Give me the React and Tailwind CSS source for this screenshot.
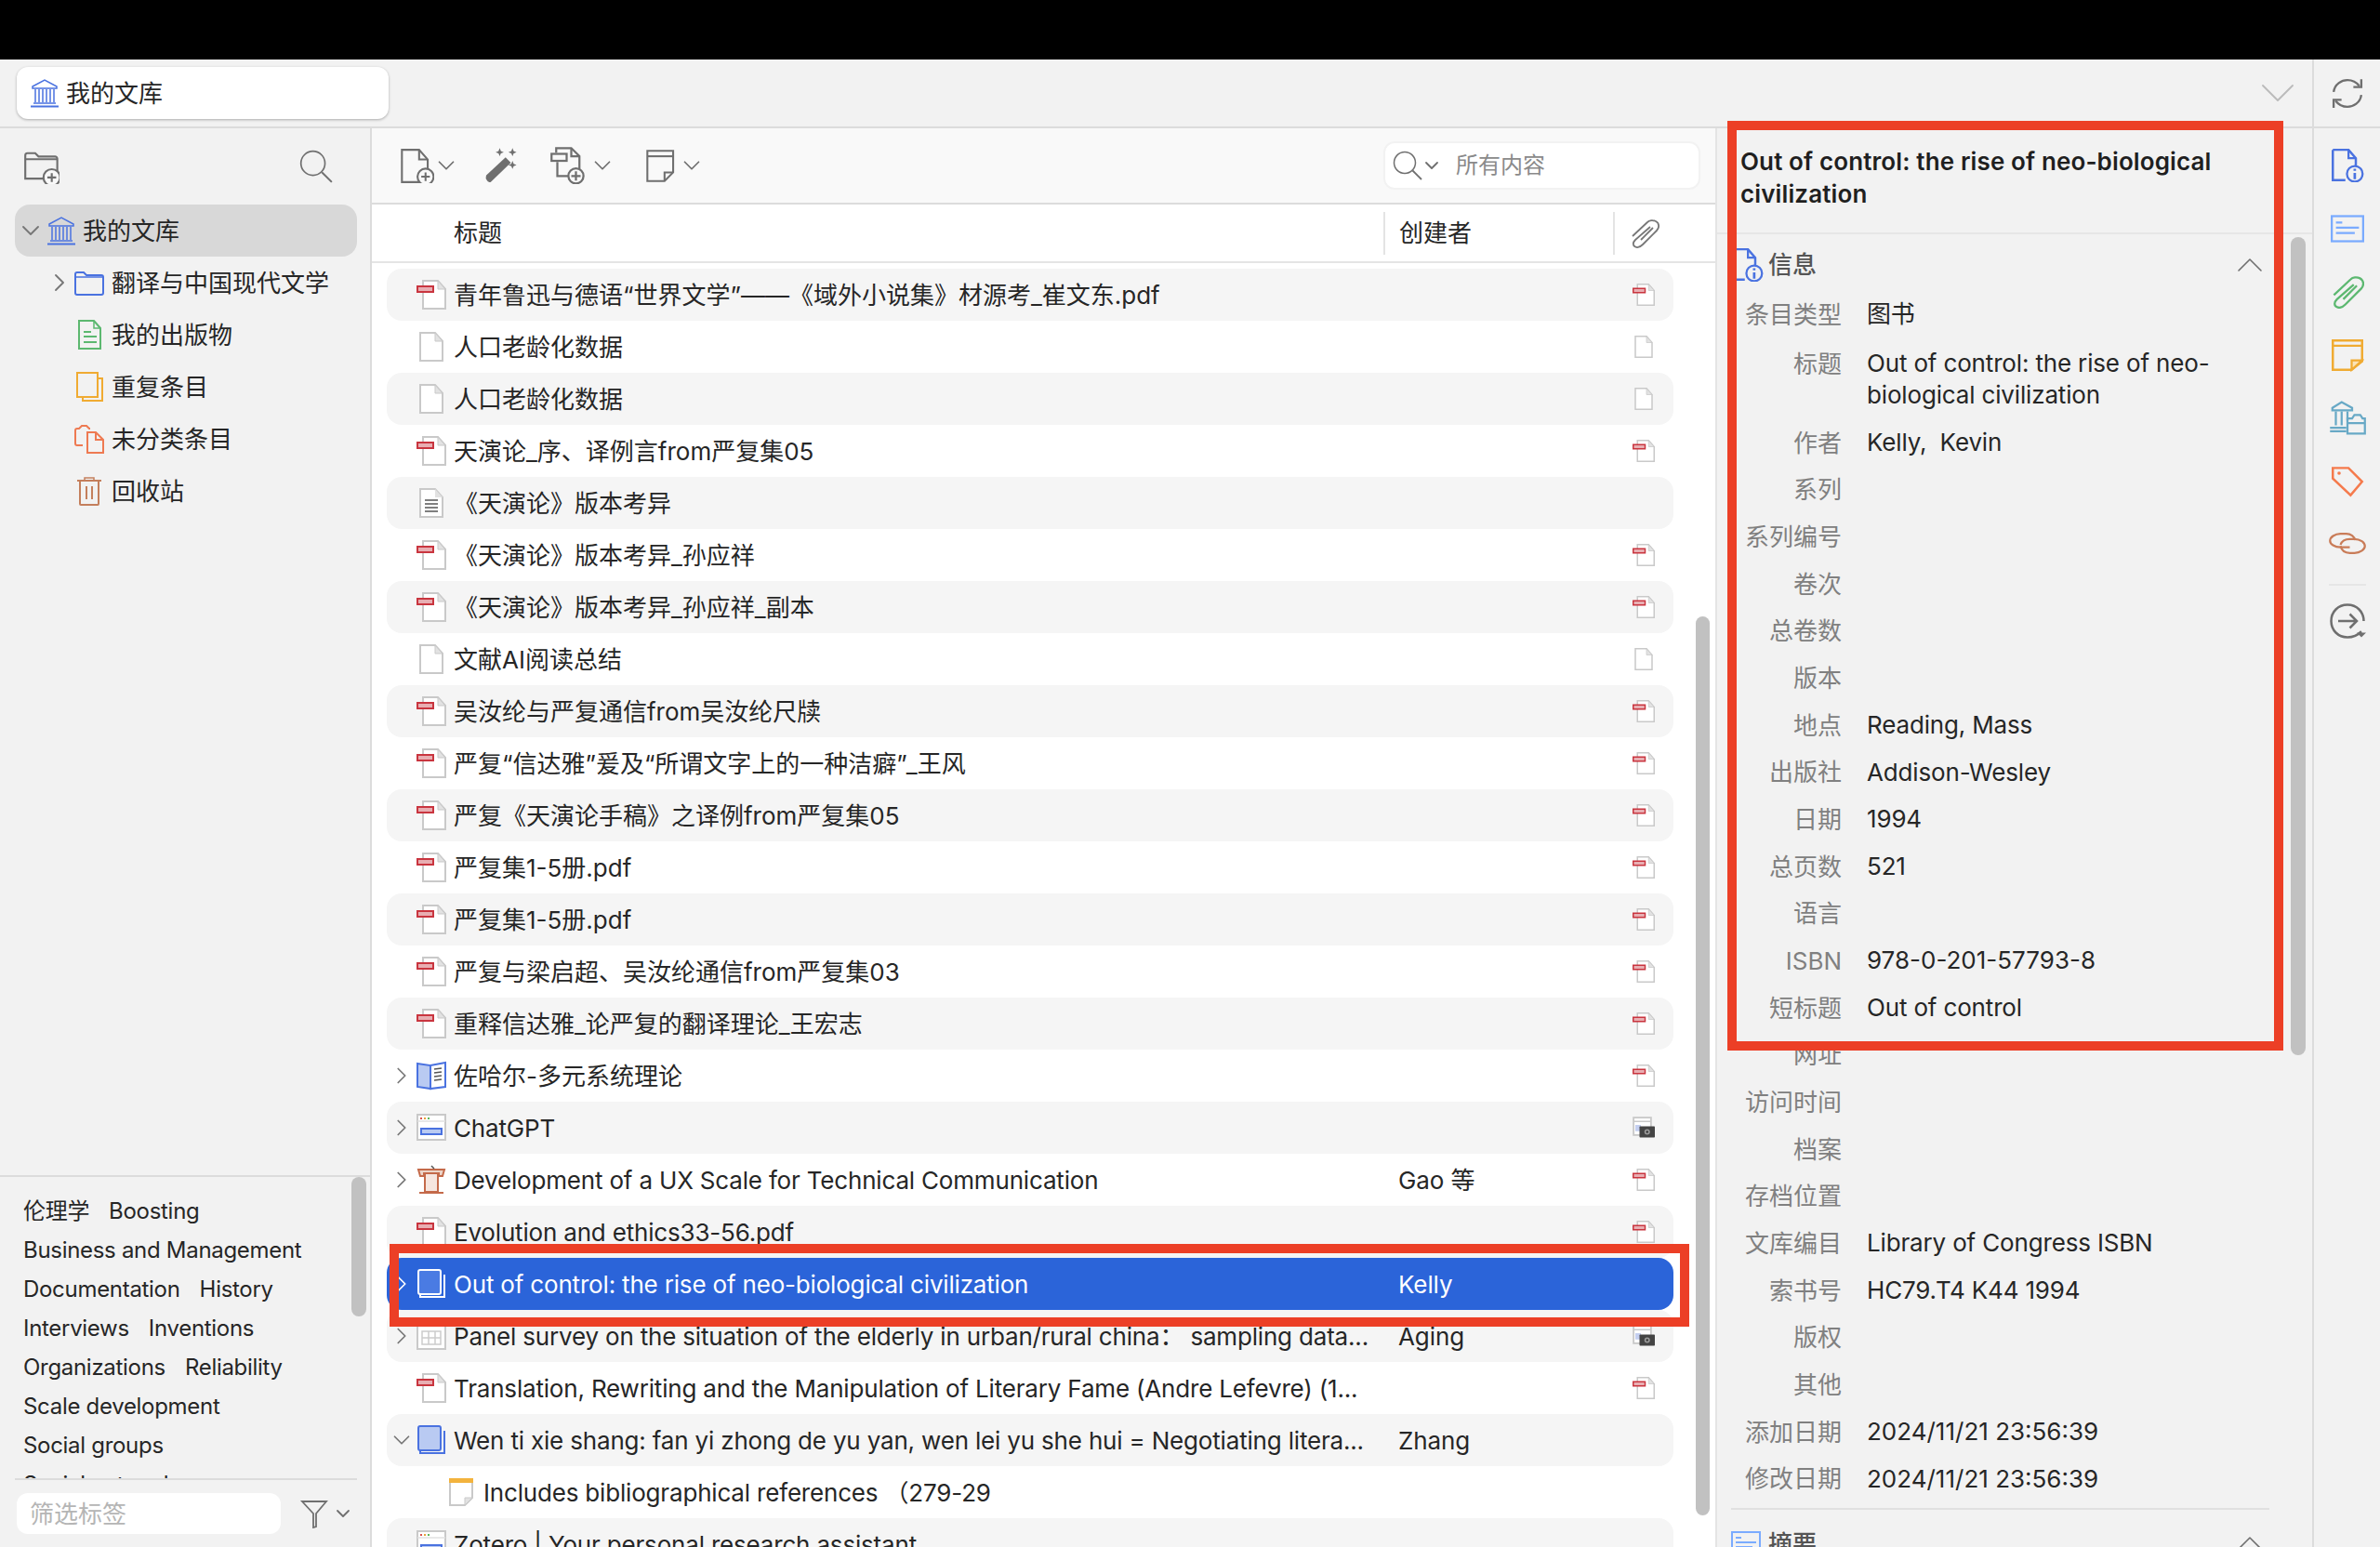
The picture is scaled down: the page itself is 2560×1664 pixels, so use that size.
import { ChevronRight, ChevronDown, ChevronUp } from 'lucide-react';

const Svg = ({ size = 32, children, className = '' }) => (
	<svg width={size} height={size} viewBox="0 0 32 32" fill="none" className={`shrink-0 ${className}`}>
		{children}
	</svg>
);

const Library = ({ size = 32 }) => (
	<Svg size={size}>
		<g stroke="#4a72e0" strokeWidth="1.5" fill="none">
			<path d="M3 9 16 2l13 7v2H3z" />
			<path d="M6 12v14M10 12v14M14 12v14M18 12v14M22 12v14M26 12v14" />
			<path d="M4 27h24" />
			<path d="M1 30.5h30" strokeWidth="2" />
		</g>
	</Svg>
);

const Folder = () => (
	<Svg>
		<path d="M1 27V7c0-1 .6-2 2-2h7l3 3h16c1 0 2 1 2 2v17c0 1-1 2-2 2H3c-1 0-2-1-2-2z" stroke="#4a72e0" strokeWidth="2" />
		<path d="M1 10h30" stroke="#4a72e0" strokeWidth="1.5" />
	</Svg>
);

const Doc = ({ size = 32, stroke = '#c9c9c9' }) => (
	<Svg size={size}>
		<path d="M4 1h16l8 9v21H4z" fill="#fff" stroke={stroke} strokeWidth="2" />
		<path d="M20 1v9h8z" fill="#e2e2e2" stroke={stroke} strokeWidth="1" />
	</Svg>
);

const Pdf = ({ size = 32 }) => (
	<Svg size={size}>
		<path d="M7 1h16l8 9v21H7z" fill="#fff" stroke="#c9c9c9" strokeWidth="2" />
		<path d="M23 1v9h8z" fill="#e2e2e2" stroke="#c9c9c9" strokeWidth="1" />
		<rect x="1" y="7" width="17" height="6" fill="#e8aeb2" stroke="#c9353f" strokeWidth="2" />
	</Svg>
);

const TextDoc = () => (
	<Svg>
		<path d="M4 1h16l8 9v21H4z" fill="#fff" stroke="#c9c9c9" strokeWidth="2" />
		<path d="M20 1v9h8z" fill="#e2e2e2" />
		<path d="M9 13h14M9 17h14M9 21h14M9 25h14" stroke="#555" strokeWidth="1.5" />
	</Svg>
);

const OpenBook = () => (
	<Svg>
		<path d="M1 3l14 2v25L1 28z" fill="#b9caf2" stroke="#4a72e0" strokeWidth="2" />
		<path d="M15 5l16-3v26l-16 2z" fill="#fff" stroke="#4a72e0" strokeWidth="2" />
		<path d="M19 9l8-1M19 13l8-1M19 17l8-1M19 21l8-1" stroke="#555" strokeWidth="1.5" />
	</Svg>
);

const Webpage = () => (
	<Svg>
		<rect x="1" y="2" width="30" height="27" fill="#fff" stroke="#c9c9c9" strokeWidth="2" />
		<path d="M1 9h30" stroke="#e0e0e0" strokeWidth="1.5" />
		<rect x="4" y="5" width="2" height="2" fill="#d9534f" />
		<rect x="8" y="5" width="2" height="2" fill="#e8a33d" />
		<rect x="12" y="5" width="2" height="2" fill="#5cb85c" />
		<rect x="5" y="17" width="22" height="6" fill="#b9caf2" stroke="#4a72e0" strokeWidth="2" />
	</Svg>
);

const Lectern = () => (
	<Svg>
		<path d="M2 5h28l-2 7h-4V9H8v3H4z" fill="#ecd5c9" stroke="#c46a4a" strokeWidth="2" />
		<path d="M9 9h14v20H9z" fill="#f6e6df" stroke="#c46a4a" strokeWidth="2" />
		<path d="M3 30h26" stroke="#c46a4a" strokeWidth="2" />
		<path d="M16 1l3 3" stroke="#555" strokeWidth="1.5" />
	</Svg>
);

const Book = ({ fill, stroke }) => (
	<Svg>
		<path d="M4 3v27h26V6" stroke={stroke} strokeWidth="2" />
		<rect x="2" y="1" width="24" height="26" rx="2" fill={fill} stroke={stroke} strokeWidth="2" />
	</Svg>
);

const Dataset = () => (
	<Svg>
		<rect x="1" y="2" width="30" height="28" fill="#fff" stroke="#c9c9c9" strokeWidth="2" />
		<path d="M5 5h22" stroke="#5cb85c" strokeWidth="2" />
		<path d="M6 11h20v14H6zM6 18h20M13 11v14M20 11v14" stroke="#ccc" strokeWidth="1.5" />
	</Svg>
);

const NoteRow = () => (
	<Svg>
		<path d="M4 2h24v20l-8 8H4z" fill="#fff" stroke="#c9c9c9" strokeWidth="2" />
		<path d="M3 1h26v5H3z" fill="#f3b33d" />
		<path d="M28 22h-8v8z" fill="#e2e2e2" stroke="#c9c9c9" />
	</Svg>
);

const Snapshot = () => (
	<Svg size={24}>
		<rect x="1.500" y="1.500" width="25" height="25" fill="#fff" stroke="#c9c9c9" strokeWidth="2.500" />
		<path d="M1.500 7h25" stroke="#c9c9c9" strokeWidth="2" />
		<rect x="4" y="12" width="8" height="9" fill="#c4cff0" />
		<rect x="10" y="14" width="22" height="16" rx="1" fill="#444" />
		<circle cx="21" cy="22" r="4" fill="#999" />
		<circle cx="21" cy="22" r="1.600" fill="#333" />
	</Svg>
);

const GrayStroke = { stroke: '#6f6f6f', strokeWidth: 1.8, fill: 'none' };

const PlusBadge = ({ cx, cy, r = 7.5 }) => (
	<g {...GrayStroke}>
		<circle cx={cx} cy={cy} r={r} fill="#f9f9f9" />
		<path d={`M${cx - 4} ${cy}h8M${cx} ${cy - 4}v8`} />
	</g>
);

const Magnifier = ({ size = 36 }) => (
	<Svg size={size}>
		<circle cx="13" cy="13" r="11.500" stroke="#6f6f6f" strokeWidth="1.500" />
		<path d="M21.500 21.500 31 31" stroke="#6f6f6f" strokeWidth="1.800" />
	</Svg>
);

const NewCollection = () => (
	<Svg size={38}>
		<path d="M1 27V6c0-1 .5-2 2-2h7l3 3h15c1 0 2 1 2 2v18H1z" {...GrayStroke} />
		<path d="M1 9.5h29" {...GrayStroke} />
		<PlusBadge cx={25} cy={26} />
	</Svg>
);

const NewItem = () => (
	<Svg size={37}>
		<path d="M2 1h16l8 9v21H2z" {...GrayStroke} />
		<path d="M18 1v9h8" {...GrayStroke} />
		<PlusBadge cx={24} cy={26} />
	</Svg>
);

const Wand = () => (
	<Svg size={40}>
		<path d="M3 25 19 10l3.5 3.5L6 29.5c-1 1-4-2-3-4.500z" fill="#6f6f6f" stroke="#6f6f6f" strokeWidth="1.500" />
		<path d="M14 1l1 2.500L17.500 4.500 15 5.500 14 8l-1-2.500L10.500 4.500 13 3.500zM25 1l1 2.500 2.500 1-2.500 1-1 2.500-1-2.500-2.500-1 2.500-1zM25 12l1 2.500 2.500 1-2.500 1-1 2.500-1-2.500-2.500-1 2.500-1z" fill="#6f6f6f" />
	</Svg>
);

const AddAttachment = () => (
	<Svg size={40}>
		<path d="M5 5V1h13l7 7v17H6V13" {...GrayStroke} />
		<path d="M18 1v7h7" {...GrayStroke} />
		<rect x="1" y="6" width="13" height="6" {...GrayStroke} />
		<PlusBadge cx={22} cy={25} r={6.500} />
	</Svg>
);

const NewNote = () => (
	<Svg size={37}>
		<path d="M2 2h24v20l-8 8H2z" {...GrayStroke} />
		<path d="M2 7h24" {...GrayStroke} />
		<path d="M26 22h-8v8" {...GrayStroke} />
	</Svg>
);

const clipPath = 'M22 9 6 23C3 26 3 29 6 30.500 9 32 12 30 14 28L29 13C32 10 32 5 28 3 25 1.500 21 2 19 4L3 19M12 23 25 10';

const PaperClip = ({ color, size = 32, width = 1.8 }) => (
	<Svg size={size}>
		<path d={clipPath} stroke={color} strokeWidth={width} />
	</Svg>
);

const Sync = () => (
	<Svg size={34}>
		<g {...GrayStroke} strokeWidth="2.200">
			<path d="M2 15C3 7 10 3 16 3c5 0 9 2 12 6" />
			<path d="M30 2v8h-8" />
			<path d="M30 18c-1 8-8 12-14 12-5 0-9-2-12-6" />
			<path d="M2 31v-8h8" />
		</g>
	</Svg>
);

const InfoDoc = () => (
	<Svg size={36}>
		<path d="M2 1h15l7 8v12M14 30H2V1" fill="none" stroke="#4a72e0" strokeWidth="2.200" />
		<path d="M17 1v8h7" stroke="#4a72e0" strokeWidth="2" />
		<circle cx="23" cy="24" r="7.500" fill="#f2f2f2" stroke="#4a72e0" strokeWidth="2" />
		<path d="M23 23v6M23 19v2" stroke="#4a72e0" strokeWidth="2.400" />
	</Svg>
);

const Abstract = ({ size = 36 }) => (
	<Svg size={size}>
		<rect x="1" y="4" width="30" height="24" fill="#f2f2f2" stroke="#7aabff" strokeWidth="2" />
		<path d="M5 10h6M5 15h22M5 20h18" stroke="#7aabff" strokeWidth="2" />
	</Svg>
);

const NoteYellow = () => (
	<Svg size={36}>
		<path d="M2 2h28v20l-10 8H2z" fill="none" stroke="#f0ab32" strokeWidth="2.200" />
		<path d="M2 7h28" stroke="#f0ab32" strokeWidth="2" />
		<path d="M30 21H20v9z" fill="#fbe3b5" stroke="#f0ab32" strokeWidth="2" />
	</Svg>
);

const LibraryFolder = () => (
	<Svg size={40}>
		<g stroke="#68a9c6" strokeWidth="1.800">
			<path d="M3 7 11 2l9 5v2H3z" />
			<path d="M6 10v12M11 10v12M16 10v8" />
			<path d="M1 24h14M1 27h14" />
			<path d="M16 16h4l2-3h5l2 3h2v13H16zM16 20h15" />
		</g>
	</Svg>
);

const TagIcon = () => (
	<Svg size={36}>
		<path d="M2 3h15l13 13-11 13L2 13z" stroke="#f57a4c" strokeWidth="2.200" />
		<circle cx="8" cy="8" r="1.600" fill="#f57a4c" />
	</Svg>
);

const LinkIcon = () => (
	<Svg size={40}>
		<g stroke="#c97c58" strokeWidth="1.800">
			<path d="M18 18H10C5 18 1 15.500 1 12.500S5 6.500 10 6.500H15C19 6.500 22 9 22.500 12" />
			<path d="M10 16C11 13 14 11 18 11H22C27 11 31 14 31 17S27 23 22 23H18C14 23 11 21 10 17" />
		</g>
	</Svg>
);

const Locate = () => (
	<Svg size={40}>
		<path d="M28 25C25 28 21 30 16 30 8 30 2 24 2 16S8 2 16 2s14 6 14 14" {...GrayStroke} strokeWidth="2" />
		<path d="M8 16h16M18 10l6 6-6 6" {...GrayStroke} strokeWidth="2" />
		<path d="M24 26h8l-4 4z" fill="#6f6f6f" />
	</Svg>
);

const Filter = () => (
	<Svg>
		<path d="M3 3h26L18 16v14l-3 1V16z" stroke="#6f6f6f" strokeWidth="1.800" />
	</Svg>
);

const Caret = ({ size = 30, open = true, width = 1.4, className = 'text-[#6f6f6f]' }) =>
	open ? (
		<ChevronDown size={size} strokeWidth={width} className={`shrink-0 ${className}`} />
	) : (
		<ChevronRight size={size} strokeWidth={width} className={`shrink-0 ${className}`} />
	);

const icons = {
	pdf: <Pdf />,
	doc: <Doc />,
	text: <TextDoc />,
	openbook: <OpenBook />,
	web: <Webpage />,
	lectern: <Lectern />,
	book: <Book fill="#b9caf2" stroke="#4a72e0" />,
	bookSel: <Book fill="#4a7be3" stroke="#fff" />,
	data: <Dataset />,
	note: <NoteRow />,
};

const attachments = {
	pdf: <Pdf size={24} />,
	doc: <Doc size={24} />,
	snap: <Snapshot />,
};

const rows = [
	{ t: '青年鲁迅与德语“世界文学”——《域外小说集》材源考_崔文东.pdf', i: 'pdf', a: 'pdf' },
	{ t: '人口老龄化数据', i: 'doc', a: 'doc' },
	{ t: '人口老龄化数据', i: 'doc', a: 'doc' },
	{ t: '天演论_序、译例言from严复集05', i: 'pdf', a: 'pdf' },
	{ t: '《天演论》版本考异', i: 'text' },
	{ t: '《天演论》版本考异_孙应祥', i: 'pdf', a: 'pdf' },
	{ t: '《天演论》版本考异_孙应祥_副本', i: 'pdf', a: 'pdf' },
	{ t: '文献AI阅读总结', i: 'doc', a: 'doc' },
	{ t: '吴汝纶与严复通信from吴汝纶尺牍', i: 'pdf', a: 'pdf' },
	{ t: '严复“信达雅”爰及“所谓文字上的一种洁癖”_王风', i: 'pdf', a: 'pdf' },
	{ t: '严复《天演论手稿》之译例from严复集05', i: 'pdf', a: 'pdf' },
	{ t: '严复集1-5册.pdf', i: 'pdf', a: 'pdf' },
	{ t: '严复集1-5册.pdf', i: 'pdf', a: 'pdf' },
	{ t: '严复与梁启超、吴汝纶通信from严复集03', i: 'pdf', a: 'pdf' },
	{ t: '重释信达雅_论严复的翻译理论_王宏志', i: 'pdf', a: 'pdf' },
	{ t: '佐哈尔-多元系统理论', i: 'openbook', a: 'pdf', c: 'closed' },
	{ t: 'ChatGPT', i: 'web', a: 'snap', c: 'closed', latin: true },
	{ t: 'Development of a UX Scale for Technical Communication', i: 'lectern', a: 'pdf', c: 'closed', by: 'Gao 等', latin: true },
	{ t: 'Evolution and ethics33-56.pdf', i: 'pdf', a: 'pdf', latin: true },
	{ t: 'Out of control: the rise of neo-biological civilization', i: 'bookSel', c: 'closed', by: 'Kelly', sel: true, latin: true },
	{ t: 'Panel survey on the situation of the elderly in urban/rural china： sampling data...', i: 'data', a: 'snap', c: 'closed', by: 'Aging', latin: true },
	{ t: 'Translation, Rewriting and the Manipulation of Literary Fame (Andre Lefevre) (1...', i: 'pdf', a: 'pdf', latin: true },
	{ t: 'Wen ti xie shang: fan yi zhong de yu yan, wen lei yu she hui = Negotiating litera...', i: 'book', c: 'open', by: 'Zhang', latin: true },
	{ t: 'Includes bibliographical references （279-29', i: 'note', child: true, latin: true },
	{ t: 'Zotero | Your personal research assistant', i: 'web', latin: true },
];

const Row = ({ row, index }) => {
	const bg = row.sel ? 'bg-[#2b64d9] text-white' : index % 2 === 0 ? 'bg-[#f5f5f5] text-[#262626]' : 'text-[#262626]';
	return (
		<div className={`flex h-14 shrink-0 items-center rounded-2xl ${bg}`}>
			<div className="flex w-8 shrink-0 justify-center">
				{row.c && (
					<Caret
						open={row.c === 'open'}
						className={row.sel ? 'text-white' : 'text-[#777]'}
					/>
				)}
			</div>
			<div className={`flex w-[1041px] shrink-0 items-center ${row.child ? 'pl-[32px]' : ''}`}>
				{icons[row.i]}
				<span className={`ml-[8px] whitespace-nowrap ${row.latin ? 'tracking-[-0.18px]' : ''}`}>{row.t}</span>
			</div>
			<div className="w-[247px] shrink-0 pl-[15px] tracking-[-0.1px]">{row.by}</div>
			<div className="flex w-[64px] shrink-0 justify-center">{row.a && attachments[row.a]}</div>
		</div>
	);
};

const Collection = ({ icon, label, selected, caret }) => (
	<div className={`flex h-14 items-center rounded-2xl ${selected ? 'bg-[#d8d8d8]' : ''}`}>
		{selected ? (
			<>
				<div className="flex w-[34px] justify-center">
					<Caret size={32} className="text-[#777]" />
				</div>
				<Library />
				<span className="ml-[7px]">{label}</span>
			</>
		) : (
			<>
				<div className="flex w-[64px] justify-end">
					{caret && <Caret size={32} open={false} className="text-[#777]" />}
				</div>
				<div className="flex w-[32px] justify-center">{icon}</div>
				<span className="ml-[8px]">{label}</span>
			</>
		)}
	</div>
);

const Publications = () => (
	<Svg>
		<path d="M5 1h16l7 8v22H5z" stroke="#5cb870" strokeWidth="2" />
		<path d="M21 1v8h7" stroke="#5cb870" strokeWidth="1.500" />
		<path d="M10 13h8M10 18h14M10 24h14" stroke="#5cb870" strokeWidth="2" />
	</Svg>
);

const Duplicates = () => (
	<Svg>
		<path d="M9 27v4h21V7h-5" stroke="#f0ab32" strokeWidth="2" />
		<rect x="3" y="1" width="22" height="26" stroke="#f0ab32" strokeWidth="2" />
	</Svg>
);

const Unfiled = () => (
	<Svg>
		<path d="M9 23H3c-1 0-2-1-2-2V7c0-1 1-2 2-2h2l3-3h5l3 3h1" stroke="#ee7a52" strokeWidth="2" />
		<path d="M14 9h9l8 8v14H14z" stroke="#ee7a52" strokeWidth="2" />
		<path d="M23 9v8h8" stroke="#ee7a52" strokeWidth="2" />
	</Svg>
);

const Trash = () => (
	<Svg>
		<path d="M3 5h26" stroke="#c47f5c" strokeWidth="2" />
		<path d="M11 5V2h10v3" stroke="#c47f5c" strokeWidth="1.500" />
		<path d="M6 5v25c0 .5.5 1 1 1h18c.5 0 1-.5 1-1V5" stroke="#c47f5c" strokeWidth="2" />
		<path d="M13 11v14M19 11v14" stroke="#c47f5c" strokeWidth="2" />
	</Svg>
);

const tagLines = [
	['伦理学', 'Boosting'],
	['Business and Management'],
	['Documentation', 'History'],
	['Interviews', 'Inventions'],
	['Organizations', 'Reliability'],
	['Scale development'],
	['Social groups'],
	['Social networks'],
];

const Sidebar = () => (
	<aside className="flex w-[400px] shrink-0 flex-col border-r-2 border-[#dcdcdc] bg-[#f2f2f2]">
		<div className="flex h-[82px] shrink-0 items-center justify-between pl-[26px] pr-[40px]">
			<NewCollection />
			<Magnifier />
		</div>
		<div className="ml-4 mr-[14px] flex flex-1 flex-col">
			<Collection label="我的文库" selected />
			<Collection label="翻译与中国现代文学" icon={<Folder />} caret />
			<Collection label="我的出版物" icon={<Publications />} />
			<Collection label="重复条目" icon={<Duplicates />} />
			<Collection label="未分类条目" icon={<Unfiled />} />
			<Collection label="回收站" icon={<Trash />} />
		</div>
		<div className="relative h-[326px] shrink-0 overflow-hidden border-t-2 border-[#dcdcdc] pl-[25px] pt-[16px] text-[24px] tracking-[-0.3px]">
			{tagLines.map((line, i) => (
				<div key={i} className="flex h-[42px] items-center gap-[21px]">
					{line.map((tag) => (
						<span key={tag}>{tag}</span>
					))}
				</div>
			))}
			<div className="absolute right-[4px] top-[0px] h-[150px] w-4 rounded-lg bg-[#c1c1c1]" />
		</div>
		<div className="relative ml-4 mr-[14px] flex h-[74px] shrink-0 items-center border-t-2 border-[#dcdcdc] bg-[#f2f2f2]">
			<div className="ml-[2px] flex h-[44px] w-[284px] items-center rounded-xl bg-white pl-[14px] text-[#b5b5b5]">筛选标签</div>
			<div className="ml-[20px]">
				<Filter />
			</div>
			<Caret size={24} width={1.8} className="ml-[3px] text-[#6f6f6f]" />
		</div>
	</aside>
);

const Center = () => (
	<main className="relative flex w-[1445px] shrink-0 flex-col overflow-hidden bg-white">
		<div className="flex h-[82px] shrink-0 items-center border-b-2 border-[#dcdcdc] bg-[#f9f9f9] pl-[30px]">
			<NewItem />
			<Caret className="-ml-[2px] text-[#6f6f6f]" />
			<div className="ml-[25px]">
				<Wand />
			</div>
			<div className="ml-[32px]">
				<AddAttachment />
			</div>
			<Caret className="ml-[1px] text-[#6f6f6f]" />
			<div className="ml-[31px]">
				<NewNote />
			</div>
			<Caret className="-ml-[2px] text-[#6f6f6f]" />
			<div className="ml-auto mr-[16px] flex h-[52px] w-[341px] items-center rounded-xl border-2 border-[#f2f2f2] bg-white pl-[8px] text-[24px] text-[#8a8a8a]">
				<Magnifier size={32} />
				<Caret size={24} width={1.8} className="-ml-[2px] text-[#6f6f6f]" />
				<span className="ml-[14px]">所有内容</span>
			</div>
		</div>
		<div className="flex h-[63px] shrink-0 items-center border-b-2 border-[#e4e4e4] text-[#262626]">
			<div className="w-[1088px] pl-[88px]">标题</div>
			<div className="h-[46px] w-[247px] border-l-2 border-[#e4e4e4] pl-[15px] leading-[46px]">创建者</div>
			<div className="flex h-[46px] items-center border-l-2 border-[#e4e4e4] pl-[16px]">
				<PaperClip color="#777" />
			</div>
		</div>
		<div className="flex flex-col pl-4 pr-[45px] pt-[6px]">
			{rows.map((row, i) => (
				<Row key={i} row={row} index={i} />
			))}
		</div>
		<div className="absolute left-[1424px] top-[525px] h-[967px] w-[15px] rounded-lg bg-[#c1c1c1]" />
	</main>
);

const fields = [
	['条目类型', '图书'],
	['标题', 'Out of control: the rise of neo-biological civilization', 'tall'],
	['作者', 'Kelly,\u00a0 Kevin'],
	['系列', ''],
	['系列编号', ''],
	['卷次', ''],
	['总卷数', ''],
	['版本', ''],
	['地点', 'Reading, Mass'],
	['出版社', 'Addison-Wesley'],
	['日期', '1994'],
	['总页数', '521'],
	['语言', ''],
	['ISBN', '978-0-201-57793-8', 'num'],
	['短标题', 'Out of control'],
	['网址', ''],
	['访问时间', ''],
	['档案', ''],
	['存档位置', ''],
	['文库编目', 'Library of Congress ISBN'],
	['索书号', 'HC79.T4 K44 1994'],
	['版权', ''],
	['其他', ''],
	['添加日期', '2024/11/21 23:56:39', 'num'],
	['修改日期', '2024/11/21 23:56:39', 'num'],
];

const Details = () => (
	<section className="relative flex min-w-0 flex-1 flex-col overflow-hidden border-l-2 border-[#e4e4e4] bg-[#f2f2f2]">
		<div className="h-[114px] shrink-0 border-b-2 border-[#e6e6e6] pl-[25px] pr-[40px] pt-[18px] font-semibold leading-[35px] tracking-[0.12px] text-[#1f1f1f]">
			Out of control: the rise of neo-biological civilization
		</div>
		<div className="flex h-[61px] shrink-0 items-center pl-[14px] pr-[43px] pt-1 font-medium text-[#555]">
			<InfoDoc />
			<span className="ml-[5px]">信息</span>
			<ChevronUp size={48} strokeWidth={0.8} className="ml-auto text-[#6f6f6f]" />
		</div>
		{fields.map(([label, value, kind]) => (
			<div key={label} className={`flex shrink-0 items-center ${kind === 'tall' ? 'h-[87.25px]' : 'h-[50.66px]'}`}>
				<div className={`w-[134px] shrink-0 text-right text-[#808080] ${kind === 'tall' ? 'self-start pt-[8px]' : ''}`}>{label}</div>
				<div className={`ml-[27px] w-[400px] leading-[34px] text-[#262626] ${kind === 'num' ? '' : 'tracking-[-0.16px]'} ${kind === 'tall' ? 'pt-[2px]' : ''}`}>{value}</div>
			</div>
		))}
		<div className="ml-[15px] mr-[46px] mt-[6px] flex shrink-0 items-center border-t-2 border-[#e0e0e0] pt-[12px] font-medium text-[#555]">
			<Abstract size={32} />
			<span className="ml-[8px]">摘要</span>
			<ChevronUp size={48} strokeWidth={0.8} className="-mr-[3px] ml-auto text-[#6f6f6f]" />
		</div>
		<div className="absolute left-[617px] top-[117px] h-[880px] w-4 rounded-lg bg-[#c1c1c1]" />
	</section>
);

const Strip = () => (
	<div className="flex w-[73px] shrink-0 flex-col items-center border-l-2 border-[#dcdcdc] bg-[#f2f2f2]">
		<div className="flex h-[74px] w-full shrink-0 items-center justify-center border-b-2 border-[#dcdcdc]">
			<Sync />
		</div>
		<div className="h-[6px] shrink-0" />
		<div className="flex h-[68px] shrink-0 items-center"><InfoDoc /></div>
		<div className="flex h-[68px] shrink-0 items-center"><Abstract /></div>
		<div className="flex h-[68px] shrink-0 items-center"><PaperClip color="#5cb870" size={36} width={2} /></div>
		<div className="flex h-[68px] shrink-0 items-center"><NoteYellow /></div>
		<div className="flex h-[68px] shrink-0 items-center"><LibraryFolder /></div>
		<div className="flex h-[68px] shrink-0 items-center"><TagIcon /></div>
		<div className="flex h-[68px] shrink-0 items-center"><LinkIcon /></div>
		<div className="mt-[8px] h-[2px] w-10 bg-[#e6e6e6]" />
		<div className="mt-[18px]"><Locate /></div>
	</div>
);

const App = () => (
	<div className="relative flex h-[1664px] w-[2560px] flex-col overflow-hidden bg-black font-[Inter,'Noto_Sans_CJK_SC',sans-serif] text-[26px] text-[#262626]">
		<div className="h-16 shrink-0 bg-black" />
		<div className="flex min-h-0 flex-1">
			<div className="flex min-w-0 flex-1 flex-col">
				<div className="flex h-[74px] shrink-0 items-center border-b-2 border-[#dcdcdc] bg-[#f2f2f2] pl-[18px] pr-[5px]">
					<div className="flex h-[56px] w-[400px] items-center rounded-xl bg-white pl-[14px] shadow-[0_1px_3px_rgba(0,0,0,0.3)]">
						<Library />
						<span className="ml-[7px]">我的文库</span>
					</div>
					<ChevronDown size={64} strokeWidth={0.7} className="ml-auto text-[#bbb]" />
				</div>
				<div className="flex min-h-0 flex-1">
					<Sidebar />
					<Center />
					<Details />
				</div>
			</div>
			<Strip />
		</div>
		<div className="pointer-events-none absolute left-[1858px] top-[130px] h-[1000px] w-[598px] border-[10px] border-[#ec3f26]" />
		<div className="pointer-events-none absolute left-[419px] top-[1338px] h-[89px] w-[1398px] border-[10px] border-[#ec3f26]" />
	</div>
);

export default App;
